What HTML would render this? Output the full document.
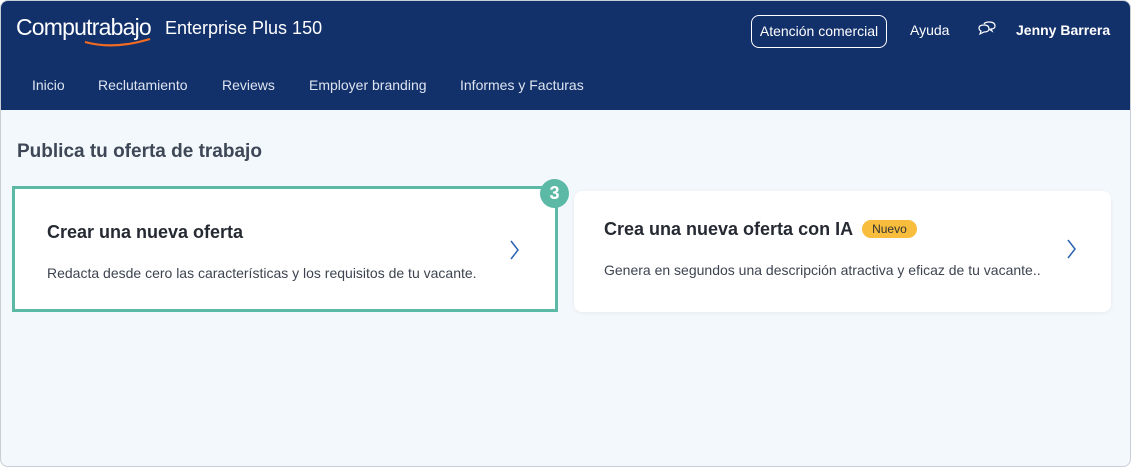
<!DOCTYPE html>
<html><head><meta charset="utf-8"><style>
*{margin:0;padding:0;box-sizing:border-box}
body{width:1131px;height:467px;font-family:"Liberation Sans",Arial,sans-serif;background:#fff;overflow:hidden}
.frame{position:absolute;left:0;top:0;width:1131px;height:467px;border:1px solid #c9ced6;border-radius:8px;overflow:hidden;background:#f3f8fc}
.in{position:absolute;left:-1px;top:-1px;width:1131px;height:467px}
.hdr{position:absolute;left:0;top:0;width:100%;height:110px;background:#12306a;color:#fff}
.abs{position:absolute;white-space:nowrap}
.logo{left:16px;top:14px;font-size:23px;letter-spacing:-0.8px}
.ent{left:165px;top:18px;font-size:18px}
.btn{left:751px;top:15px;width:136px;height:33px;border:1px solid #fff;border-radius:8px;font-size:14px;text-align:center;line-height:31px}
.nav{top:77px;font-size:14px;color:#dde4f0}
h1{position:absolute;left:17px;top:141px;font-size:19px;color:#3e4756;font-weight:bold}
.c1{left:12px;top:186px;width:546px;height:126px;border:3px solid #5bb9a6;background:#fff}
.c2{left:574px;top:191px;width:537px;height:121px;background:#fff;border-radius:8px;box-shadow:0 1px 4px rgba(0,0,0,.06)}
.t{position:absolute;font-size:18px;font-weight:bold;color:#262b33;white-space:nowrap}
.d{position:absolute;font-size:14px;color:#3d4450;white-space:nowrap}
.badge{left:540px;top:179px;width:29px;height:29px;border-radius:50%;background:#5bb9a6;color:#fff;font-weight:bold;font-size:18px;text-align:center;line-height:29px}
.nuevo{display:inline-block;background:#f8bd3c;color:#333;font-size:12px;font-weight:normal;border-radius:9px;padding:2px 10px;margin-left:9px;vertical-align:2px}
</style></head><body><div class="frame"><div class="in">
<div class="hdr">
<div class="abs logo">Computrabajo</div>
<svg class="abs" style="left:84px;top:38px" width="68" height="10"><path d="M1 4 Q30 12 66 1" stroke="#f26b22" stroke-width="2.2" fill="none"/></svg>
<div class="abs ent">Enterprise Plus 150</div>
<div class="abs btn">Atención comercial</div>
<div class="abs" style="left:910px;top:22px;font-size:14px">Ayuda</div>
<svg class="abs" style="left:977px;top:21px" width="20" height="16" viewBox="0 0 20 16" fill="none" stroke="#fff" stroke-width="1.2"><path d="M7 3 Q8 1 12 1 Q18 1 18 5 Q18 8 14 8 L15 10 L12 8"/><path d="M2 7 Q2 4 7 4 Q12 4 12 8 Q12 11 7 11 L3 13 L4 10 Q2 9 2 7Z"/></svg>
<div class="abs" style="left:1016px;top:22px;font-size:14px;font-weight:bold">Jenny Barrera</div>
<div class="abs nav" style="left:32px">Inicio</div>
<div class="abs nav" style="left:98px">Reclutamiento</div>
<div class="abs nav" style="left:222px">Reviews</div>
<div class="abs nav" style="left:309px">Employer branding</div>
<div class="abs nav" style="left:460px">Informes y Facturas</div>
</div>
<h1>Publica tu oferta de trabajo</h1>
<div class="abs c1">
<div class="t" style="left:32px;top:33px">Crear una nueva oferta</div>
<div class="d" style="left:32px;top:76px">Redacta desde cero las características y los requisitos de tu vacante.</div>
<svg style="position:absolute;left:494px;top:50px" width="12" height="22"><path d="M2 2 L9 11 L2 20" stroke="#2a62b0" stroke-width="1.5" fill="none"/></svg>
</div>
<div class="abs badge">3</div>
<div class="abs c2">
<div class="t" style="left:30px;top:28px">Crea una nueva oferta con IA<span class="nuevo">Nuevo</span></div>
<div class="d" style="left:30px;top:71px">Genera en segundos una descripción atractiva y eficaz de tu vacante..</div>
<svg style="position:absolute;left:492px;top:47px" width="12" height="22"><path d="M2 2 L9 11 L2 20" stroke="#2a62b0" stroke-width="1.5" fill="none"/></svg>
</div>
</div></div></body></html>
